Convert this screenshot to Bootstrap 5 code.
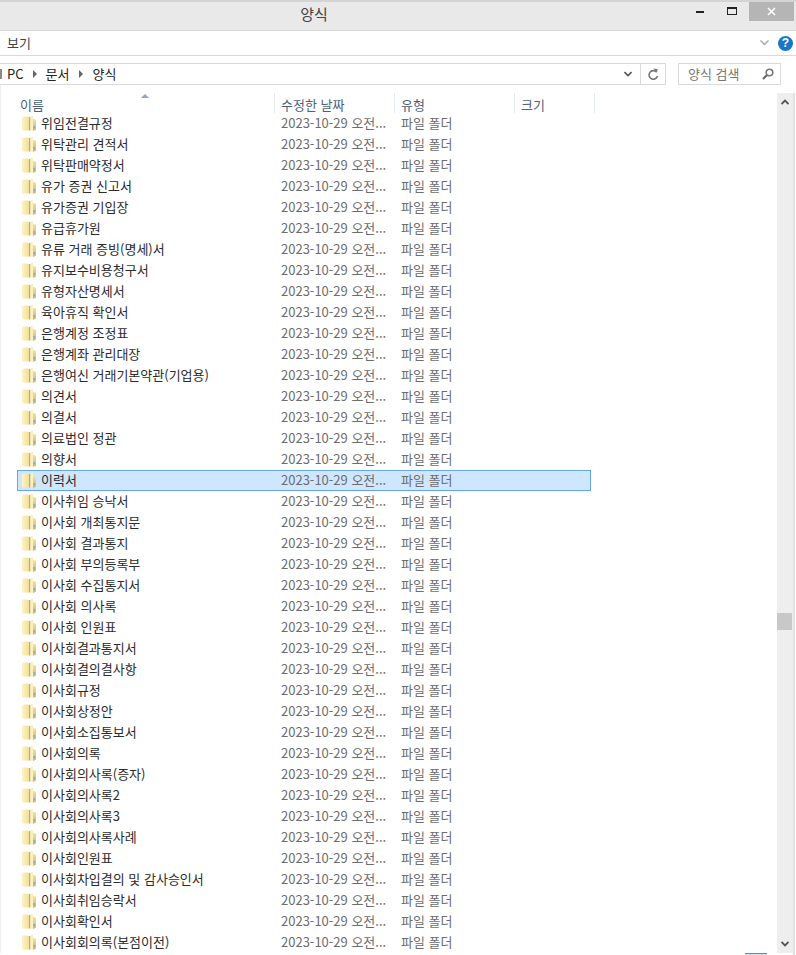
<!DOCTYPE html>
<html lang="ko">
<head>
<meta charset="utf-8">
<title>양식</title>
<link href="https://cdn.jsdelivr.net/npm/bootstrap@5.3.0/dist/css/bootstrap.min.css" rel="stylesheet">
<style>
html,body{height:955px;overflow:hidden;background:#fff}
body{font-family:"Noto Sans CJK KR","Noto Sans",sans-serif;font-size:13px;color:#333;position:relative}
.win-title{height:31px;background:#e9e9e9;border-top:2px solid #d4d4d4;border-bottom:1px solid #d6d6d6;font-size:15px;color:#444}
.win-name{width:628px;text-align:center;padding-top:1px}
.win-btns{margin-left:auto;gap:0}
.wb{height:19px;display:flex;align-items:center;justify-content:center}
.wb-min{width:27px;margin-right:3px}.wb-max{width:30px;margin-right:2px}.wb-close{width:45px;background:#b5b5b5;margin-right:2px}
.rib{height:25px;border-bottom:1px solid #d9d9d9;padding-left:7px;color:#444}
.rib-right{margin-left:auto;padding-right:3px;gap:9px}
.help{width:15px;height:15px;border-radius:50%;background:#1a76c9;color:#fff;font:bold 12px/15px "Liberation Sans",sans-serif;text-align:center}
.addr{height:29px;padding-top:7px}
.addr-box{width:666px;height:22px;border:1px solid #d9d9d9;border-left:0;color:#222}
.pc-sliver{width:2px;height:10px;background:#8a8a8a;margin-right:5px}
.sep-tri{width:0;height:0;border-left:4px solid #666;border-top:4px solid transparent;border-bottom:4px solid transparent;margin:0 9px}
.sep-tri.sep-b{margin-left:10px}
.addr-end{margin-left:auto}
.addr-dd{width:25px;height:20px;border-right:1px solid #d9d9d9}
.addr-ref{width:24px;height:20px}
.srch{width:103px;height:22px;margin-left:12px;border:1px solid #d9d9d9;padding:0 6px 0 9px;color:#777}
.pane{height:868px;padding-top:8px}
.heads{height:20px;color:#4c607a;position:relative}
.hc{height:20px;border-right:1px solid #e3ecf6;padding-left:6px;line-height:23px}
.c-name{width:275px;padding-left:20px}
.c-date{width:120px}.c-type{width:120px}.c-size{width:80px}
.sort-up{position:absolute;left:141px;top:1px;width:0;height:0;border-left:4px solid transparent;border-right:4px solid transparent;border-bottom:4px solid #8aa6c4}
.rows{margin-left:17px;width:574px}
.frow{height:21px;border:1px solid transparent;white-space:nowrap}
.frow span{line-height:19px;padding-bottom:2px}
.frow.sel{background:#cfe6ff;border-color:#66a7e8}
.fi{width:14px;height:15px;margin:0 5px 0 4px;flex:none}
.fname{width:240px;color:#2b2b2b}
.fdate{width:120px;color:#6d6d6d}
.ftype{color:#6d6d6d}
.sb{position:absolute;left:777px;top:93px;width:16px;height:860px;background:#eeeeee}
.sb-thumb{position:absolute;left:0;top:520px;width:15px;height:17px;background:#c8c8c8}
.sb-up{position:absolute;left:4px;top:6px}
.sb-dn{position:absolute;left:4px;bottom:6px}
.sb-edge{position:absolute;left:793px;top:93px;width:3px;height:862px;background:#fff;border-left:2px solid #e2e2e2}
.mini{position:absolute;left:745px;top:953px;width:22px;height:2px;background:#cde6f7;border-top:1px solid #26a0da}
.lg-left{position:absolute;left:0;top:85px;width:1px;height:868px;background:#efefef}
</style>
</head>
<body>
<svg width="0" height="0" class="d-block position-absolute">
<defs>
<linearGradient id="gf" x1="0" y1="0" x2="1" y2="0"><stop offset="0" stop-color="#fdf3c4"/><stop offset="1" stop-color="#f3df98"/></linearGradient>
<linearGradient id="gb" x1="0" y1="0" x2="0" y2="1"><stop offset="0" stop-color="#f3e2a6"/><stop offset="1" stop-color="#d6b25a"/></linearGradient>
<symbol id="folder" viewBox="0 0 14 15">
<path d="M0 1.500 1 .5h5L7 1.500V14.500H1l-1-.5z" fill="url(#gf)"/>
<rect x="7" y="1" width="1.500" height="13.500" fill="#cfa94a"/>
<path d="M8.500 0H11v14.500H8.500z" fill="#faf0c2"/>
<path d="M11 2.500 14 4v9.500L11 15z" fill="url(#gb)"/>
<rect x="11.600" y="10" width="1.200" height="2.200" fill="#6fa6d0"/>
</symbol>
</defs>
</svg>

<header class="win-title d-flex">
  <div class="win-name">양식</div>
  <div class="win-btns d-flex">
    <div class="wb wb-min"><svg width="9" height="3"><rect width="8" height="2" y="1" fill="#222"/></svg></div>
    <div class="wb wb-max"><svg width="11" height="9"><rect x=".5" y=".5" width="9" height="7" fill="none" stroke="#222"/><rect width="10" height="2" fill="#222"/></svg></div>
    <div class="wb wb-close"><svg width="9" height="9"><path d="M1 1l7 7M8 1 1 8" stroke="#fff" stroke-width="1.600"/></svg></div>
  </div>
</header>

<div class="rib d-flex align-items-center">
  <span>보기</span>
  <div class="rib-right d-flex align-items-center">
    <svg width="9" height="6"><path d="M.5.5 4.500 4.500 8.500.5" fill="none" stroke="#aaa" stroke-width="1.500"/></svg>
    <div class="help">?</div>
  </div>
</div>

<div class="addr d-flex">
  <div class="addr-box d-flex align-items-center">
    <i class="pc-sliver"></i><span>PC</span><i class="sep-tri"></i><span>문서</span><i class="sep-tri sep-b"></i><span>양식</span>
    <div class="addr-end d-flex align-items-center">
      <div class="addr-dd d-flex align-items-center justify-content-center"><svg width="8" height="6"><path d="M.5 1 4 4.500 7.500 1" fill="none" stroke="#555" stroke-width="1.600"/></svg></div>
      <div class="addr-ref d-flex align-items-center justify-content-center"><svg width="12" height="13" viewBox="0 0 12 13"><path d="M9.500 4A4.300 4.300 0 1 0 10.500 8" fill="none" stroke="#777" stroke-width="1.600"/><path d="M6.500 .5 10.500 1l-.5 4z" fill="#777"/></svg></div>
    </div>
  </div>
  <div class="srch d-flex align-items-center justify-content-between">
    <span>양식 검색</span>
    <svg width="12" height="12" viewBox="0 0 12 12"><circle cx="7.500" cy="4.500" r="3.300" fill="none" stroke="#777" stroke-width="1.600"/><path d="M5 7 1 11" stroke="#666" stroke-width="2.200"/></svg>
  </div>
</div>

<main class="pane" id="pane">
  <div class="heads d-flex">
    <div class="hc c-name">이름</div>
    <div class="hc c-date">수정한 날짜</div>
    <div class="hc c-type">유형</div>
    <div class="hc c-size">크기</div>
    <i class="sort-up"></i>
  </div>
  <div class="rows" id="rows"></div>
</main>

<div class="lg-left"></div>
<div class="sb">
  <svg class="sb-up" width="8" height="6"><path d="M.5 5 4 1.500 7.500 5" fill="none" stroke="#555" stroke-width="1.800"/></svg>
  <div class="sb-thumb"></div>
  <svg class="sb-dn" width="8" height="6"><path d="M.5 1 4 4.500 7.500 1" fill="none" stroke="#555" stroke-width="1.800"/></svg>
</div>
<div class="sb-edge"></div>
<div class="mini"></div>

<script>
const names=["위임전결규정","위탁관리 견적서","위탁판매약정서","유가 증권 신고서","유가증권 기입장","유급휴가원","유류 거래 증빙(명세)서","유지보수비용청구서","유형자산명세서","육아휴직 확인서","은행계정 조정표","은행계좌 관리대장","은행여신 거래기본약관(기업용)","의견서","의결서","의료법인 정관","의향서","이력서","이사취임 승낙서","이사회 개최통지문","이사회 결과통지","이사회 부의등록부","이사회 수집통지서","이사회 의사록","이사회 인원표","이사회결과통지서","이사회결의결사항","이사회규정","이사회상정안","이사회소집통보서","이사회의록","이사회의사록(증자)","이사회의사록2","이사회의사록3","이사회의사록사례","이사회인원표","이사회차입결의 및 감사승인서","이사회취임승락서","이사회확인서","이사회회의록(본점이전)"];
document.getElementById('rows').innerHTML=names.map(n=>`<div class="frow d-flex align-items-center${n==='이력서'?' sel':''}"><svg class="fi"><use href="#folder"/></svg><span class="fname">${n}</span><span class="fdate">2023-10-29 오전...</span><span class="ftype">파일 폴더</span></div>`).join('');
</script>
<script src="https://cdn.jsdelivr.net/npm/bootstrap@5.3.0/dist/js/bootstrap.bundle.min.js"></script>
</body>
</html>
